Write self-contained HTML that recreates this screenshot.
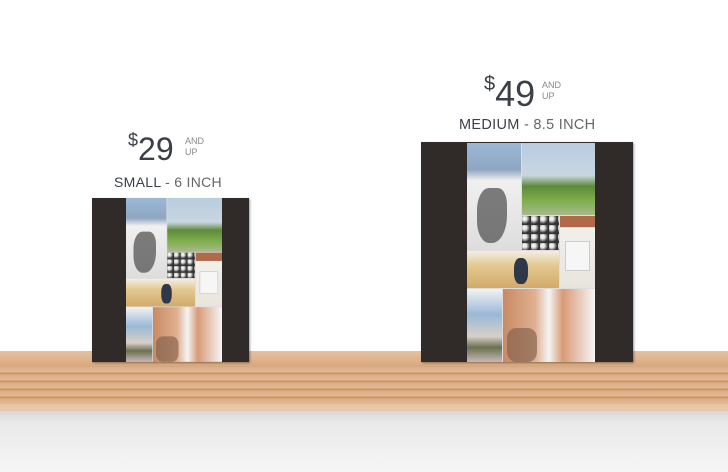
<!DOCTYPE html><html><head><style>
*{margin:0;padding:0;box-sizing:border-box}
body{width:728px;height:472px;overflow:hidden;background:#fff;font-family:"Liberation Sans",sans-serif;position:relative}
.a{position:absolute}
.price{color:#3a3f48;font-weight:300;white-space:nowrap}
.strip{position:absolute;left:0;top:0;width:128px;height:219px;background:#ddd;transform-origin:0 0}
.strip div{position:absolute}
</style></head><body>
<!-- shelf -->
<div class="a" style="left:0;top:351px;width:728px;height:60px;background:repeating-linear-gradient(180deg,#dcae86 0,#e2b994 5px,#c98f5e 6px,#dcac82 8px);"></div>
<div class="a" style="left:0;top:351px;width:728px;height:16px;background:linear-gradient(#e5c09f,#d8a87e)"></div>
<div class="a" style="left:0;top:404px;width:728px;height:7px;background:#e8c6a8"></div>
<div class="a" style="left:0;top:411px;width:728px;height:61px;background:linear-gradient(#d8d8d8,#eaeaea 20%,#f5f5f5)"></div>

<!-- small -->
<div class="a price" style="left:128px;top:130px;font-size:32px"><span style="font-size:18px;vertical-align:14px">$</span>29</div>
<div class="a" style="left:185px;top:136px;font-size:9px;color:#888;line-height:11px">AND<br>UP</div>
<div class="a" style="left:114px;top:174px;font-size:14px;color:#3a3f48;letter-spacing:.3px">SMALL <span style="color:#666">- 6 INCH</span></div>
<div class="a" style="left:92px;top:198px;width:157px;height:164px;background:#302b28;box-shadow:1px 1px 2px rgba(0,0,0,.4)">
<div class="strip" id="s1" style="left:34px;top:0;transform:scale(.75,.748)"></div></div>

<!-- medium -->
<div class="a price" style="left:484px;top:73px;font-size:36px"><span style="font-size:20px;vertical-align:16px">$</span>49</div>
<div class="a" style="left:542px;top:80px;font-size:9px;color:#888;line-height:11px">AND<br>UP</div>
<div class="a" style="left:459px;top:117px;font-size:14.5px;color:#3a3f48;letter-spacing:.3px">MEDIUM <span style="color:#666">- 8.5 INCH</span></div>
<div class="a" style="left:421px;top:142px;width:212px;height:220px;background:#302b28;box-shadow:1px 1px 2px rgba(0,0,0,.4)">
<div class="strip" id="s2" style="left:46px;top:1px"></div></div>

<template id="t">
<div style="left:0;top:0;width:54px;height:107px;background:linear-gradient(#9bb8d8 0,#8fa6c0 25%,#f0f0f0 35%,#ddd 100%)"></div>
<div style="left:10px;top:45px;width:30px;height:55px;background:#4a4a4a;opacity:.7;border-radius:40% 30% 50% 40%"></div>
<div style="left:55px;top:0;width:73px;height:72px;background:linear-gradient(#b8cde0 0,#c8d6e0 45%,#5e8a3c 60%,#7fae4a 80%,#a8b890 100%)"></div>
<div style="left:55px;top:73px;width:37px;height:34px;background:radial-gradient(circle at 30% 30%,#eee 20%,#333 60%);background-size:9px 9px"></div>
<div style="left:93px;top:73px;width:35px;height:72px;background:linear-gradient(#b06a4a 0,#b06a4a 15%,#f2f0ec 16%,#e8e4de 100%)"></div>
<div style="left:98px;top:98px;width:25px;height:30px;background:#f6f6f6;border:1px solid #ccc"></div>
<div style="left:0;top:108px;width:92px;height:37px;background:linear-gradient(#f2eee4 0,#e2c890 40%,#d2aa6a 100%)"></div>
<div style="left:47px;top:115px;width:14px;height:26px;background:#2e3848;border-radius:40%"></div>
<div style="left:0;top:146px;width:35px;height:73px;background:linear-gradient(#f2f2f2 0,#9ab8d8 35%,#d8d0c8 65%,#6a7050 80%,#c8b8b8 100%)"></div>
<div style="left:36px;top:146px;width:92px;height:73px;background:linear-gradient(90deg,#c88a64 0,#e0b090 35%,#f4f4f4 50%,#d89a78 65%,#f6f6f6 100%)"></div>
<div style="left:40px;top:185px;width:30px;height:34px;background:#7a5a48;border-radius:30%;opacity:.6"></div>
</template>
<script>
var t=document.getElementById('t').innerHTML;
document.getElementById('s1').innerHTML=t;document.getElementById('s2').innerHTML=t;
</script>
</body></html>
